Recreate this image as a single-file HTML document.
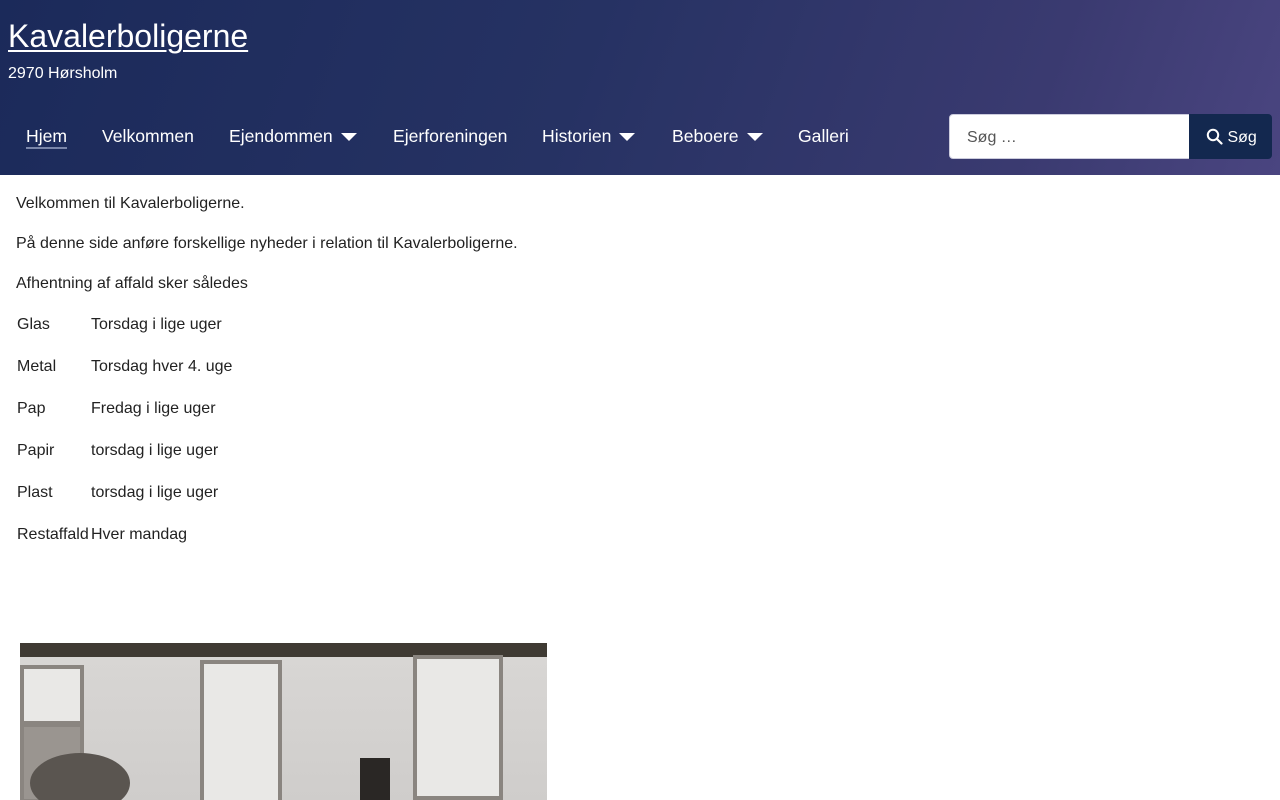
<!DOCTYPE html>
<html><head><meta charset="utf-8"><style>
*{box-sizing:border-box;margin:0;padding:0}
body{width:1280px;height:800px;overflow:hidden;font-family:"Liberation Sans",sans-serif;background:#fff;color:#222}
header{height:175px;background:linear-gradient(110deg,#1b2a5a 0%,#263263 45%,#3a3a70 80%,#4a4580 100%);position:relative;color:#fff}
.title{position:absolute;left:8px;top:18px;font-size:32px;text-decoration:underline;text-underline-offset:3px;text-decoration-thickness:2px}
.sub{position:absolute;left:8px;top:65px;font-size:16px}
.nav{position:absolute;top:126px;left:0;font-size:17.6px}
.nav span{position:absolute;white-space:nowrap}
.tri{display:inline-block;width:0;height:0;border-left:8px solid transparent;border-right:8px solid transparent;border-top:8px solid #fff;margin-left:8px;vertical-align:middle}
.hj{border-bottom:2px solid #7a86aa;padding-bottom:1px}
.search{position:absolute;left:949px;top:114px;width:241px;height:45px;background:#fff;border:1px solid #ccd;border-radius:4px 0 0 4px;color:#555;font-size:16px;padding:14px 17px}
.btn{position:absolute;left:1189px;top:114px;width:83px;height:45px;background:#13284f;border-radius:0 4px 4px 0;color:#fff;font-size:16px;padding:14px 0 0 17px}
.c{position:absolute;left:16px;font-size:16px}
.photo{position:absolute;left:20px;top:643px;width:527px;height:157px;background:linear-gradient(#3f3a33 0,#3f3a33 14px,#d8d6d4 14px,#cfcdcb 100%);overflow:hidden}
.w{position:absolute;border:4px solid #8a8580;background:#e9e8e6}
</style></head><body>
<header>
<div class="title">Kavalerboligerne</div>
<div class="sub">2970 Hørsholm</div>
<div class="nav">
<span style="left:26px"><span class="hj" style="position:static">Hjem</span></span>
<span style="left:102px">Velkommen</span>
<span style="left:229px">Ejendommen<i class="tri"></i></span>
<span style="left:393px">Ejerforeningen</span>
<span style="left:542px">Historien<i class="tri"></i></span>
<span style="left:672px">Beboere<i class="tri"></i></span>
<span style="left:798px">Galleri</span>
</div>
<div class="search">Søg …</div>
<div class="btn"><svg width="17" height="17" viewBox="0 0 17 17" style="vertical-align:-3px"><circle cx="7" cy="7" r="5.2" fill="none" stroke="#fff" stroke-width="2"/><path d="M11 11l4.5 4.5" stroke="#fff" stroke-width="2.2" stroke-linecap="round"/></svg> Søg</div>
</header>
<div class="c" style="top:195px">Velkommen til Kavalerboligerne.</div>
<div class="c" style="top:235px">På denne side anføre forskellige nyheder i relation til Kavalerboligerne.</div>
<div class="c" style="top:275px">Afhentning af affald sker således</div>
<div class="c" style="left:17px;top:316px">Glas</div><div class="c" style="left:91px;top:316px">Torsdag i lige uger</div>
<div class="c" style="left:17px;top:358px">Metal</div><div class="c" style="left:91px;top:358px">Torsdag hver 4. uge</div>
<div class="c" style="left:17px;top:400px">Pap</div><div class="c" style="left:91px;top:400px">Fredag i lige uger</div>
<div class="c" style="left:17px;top:442px">Papir</div><div class="c" style="left:91px;top:442px">torsdag i lige uger</div>
<div class="c" style="left:17px;top:484px">Plast</div><div class="c" style="left:91px;top:484px">torsdag i lige uger</div>
<div class="c" style="left:17px;top:526px">Restaffald</div><div class="c" style="left:91px;top:526px">Hver mandag</div>
<div class="photo">
<div class="w" style="left:0;top:22px;width:64px;height:60px"></div>
<div class="w" style="left:0;top:80px;width:64px;height:80px;background:#9a9590"></div>
<div class="w" style="left:180px;top:17px;width:82px;height:145px"></div>
<div class="w" style="left:393px;top:12px;width:90px;height:145px"></div>
<div style="position:absolute;left:10px;top:110px;width:100px;height:60px;border-radius:50%;background:#5a5550"></div>
<div style="position:absolute;left:340px;top:115px;width:30px;height:50px;background:#2a2725"></div>
</div>
</body></html>
